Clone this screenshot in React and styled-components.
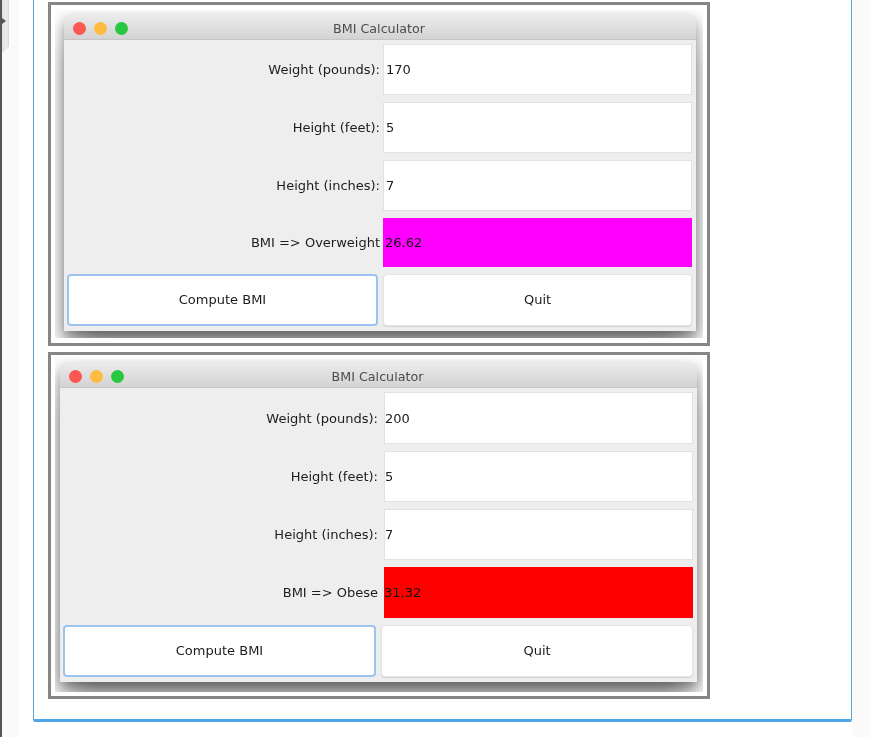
import React from 'react';
import styled, { createGlobalStyle } from 'styled-components';

const GlobalStyle = createGlobalStyle`
  html, body {
    margin: 0;
    padding: 0;
    height: 100%;
    overflow: hidden;
    background: #ffffff;
    font-family: "DejaVu Sans", "Liberation Sans", sans-serif;
  }
`;

const Page = styled.div`
  display: flex;
  align-items: flex-start;
  width: 870px;
  height: 737px;
  overflow: hidden;
`;

const Gutter = styled.div`
  width: 33px;
  height: 737px;
  flex: none;
  display: flex;
  background: linear-gradient(to right, #fafafa 0, #fafafa 19px, #ffffff 19px);
`;

const SideEdge = styled.div`
  width: 2px;
  height: 737px;
  background: #55555d;
`;

const SideTab = styled.div`
  position: relative;
  width: 7px;
  height: 52px;
  background: linear-gradient(to right, #e2e2e2, #ececec 70%, #d4d4d4);
  clip-path: polygon(0 0, 100% 0, 100% 90%, 15% 100%, 0 100%);

  &::after {
    content: '';
    position: absolute;
    left: 0;
    top: 18px;
    border-left: 4px solid #555555;
    border-top: 3px solid transparent;
    border-bottom: 3px solid transparent;
  }
`;

const Panel = styled.div`
  width: 819px;
  height: 722px;
  box-sizing: border-box;
  flex: none;
  padding: 2px 0 0 14px;
  background: #ffffff;
  border-left: 1px solid #5aa5dc;
  border-right: 1px solid #5aa5dc;
  border-bottom: 3px solid #4fa6e6;
  border-bottom-left-radius: 2px;
  border-bottom-right-radius: 2px;
  display: flex;
  flex-direction: column;
  gap: 6px;
`;

const RightGutter = styled.div`
  flex: 1;
  height: 737px;
  background: #fafafa;
`;

const Frame = styled.div`
  width: 662px;
  height: ${(p) => p.$height}px;
  box-sizing: border-box;
  border: 3px solid #868686;
  background: #ffffff;
  padding: ${(p) => p.$pad};
`;

const Shot = styled.div`
  height: 100%;
  box-sizing: border-box;
  overflow: hidden;
  padding: ${(p) => p.$pad};
  background: #fcfcfc;
  filter: blur(0.3px);
`;

const Window = styled.div`
  width: ${(p) => p.$width}px;
  background: #eeeeee;
  border-radius: 6px 6px 0 0;
  box-shadow: 0 6px 14px rgba(0, 0, 0, 0.42), 0 24px 30px -8px rgba(0, 0, 0, 0.42);
`;

const TitleBar = styled.div`
  position: relative;
  height: 25px;
  box-sizing: border-box;
  padding: 2px 2px 0 0;
  display: flex;
  align-items: center;
  justify-content: center;
  border-radius: 6px 6px 0 0;
  background: linear-gradient(to bottom, #ebebeb, #d3d3d3);
  border-bottom: 1px solid #c6c6c6;
`;

const Lights = styled.div`
  position: absolute;
  left: 9px;
  top: 7px;
  display: flex;
  gap: 8px;
`;

const Light = styled.span`
  width: 13px;
  height: 13px;
  border-radius: 50%;
  background: ${(p) => p.$color};
`;

const Title = styled.span`
  font-size: 12.7px;
  color: #4c4c4c;
`;

const Form = styled.div`
  display: grid;
  grid-template-columns: ${(p) => p.$columns};
  grid-template-rows: ${(p) => p.$rows};
  column-gap: 5px;
  row-gap: 7px;
  padding: 4px 0 5px 3px;
`;

const Label = styled.div`
  display: flex;
  align-items: center;
  justify-content: flex-end;
  margin-right: -2px;
  font-size: 13px;
  color: #1c1c1c;
  white-space: pre;
`;

const Field = styled.div`
  display: flex;
  align-items: center;
  box-sizing: border-box;
  margin-left: ${(p) => p.$inset}px;
  padding-left: ${(p) => (p.$inset ? 0 : 2)}px;
  font-size: 13px;
  color: #1c1c1c;
  background: #ffffff;
  border: 1px solid #e2e2e2;
`;

const Result = styled.div`
  display: flex;
  align-items: center;
  margin-left: ${(p) => p.$inset}px;
  padding-left: ${(p) => (p.$inset ? 0 : 2)}px;
  font-size: 13px;
  color: #111111;
  background: ${(p) => p.$color};
`;

const Button = styled.button`
  font: inherit;
  font-size: 13px;
  color: #1c1c1c;
  margin: 0;
  padding: 0 0 2px;
  background: #ffffff;
  border-radius: 4px;
  border: ${(p) => (p.$focused ? '2px solid #9cc4ee' : '1px solid #e4e4e4')};
  box-shadow: ${(p) => (p.$focused ? 'none' : '0 1px 1px #d4d4d4')};
`;

const rows = (weight, label, bmi, color) => [
  ['Weight (pounds):', weight],
  ['Height (feet):', '5'],
  ['Height (inches):', '7'],
  [label, bmi, color],
];

const shots = [
  {
    height: 344,
    framePad: '5px 4px',
    pad: '5px 0 0 9px',
    width: 632,
    columns: '311px 309px',
    gridRows: '51px 51px 51px 49px 52px',
    inset: 0,
    rows: rows('170', 'BMI => Overweight', '26.62', '#ff00ff'),
  },
  {
    height: 347,
    framePad: '3px 4px 4px',
    pad: '5px 0 0 5px',
    width: 637,
    columns: '313px 312px',
    gridRows: '52px 51px 51px 51px 52px',
    inset: 3,
    rows: rows('200', 'BMI => Obese', '31.32', '#ff0000'),
  },
];

export default function App() {
  return (
    <Page>
      <GlobalStyle />
      <Gutter>
        <SideEdge />
        <SideTab />
      </Gutter>
      <Panel>
        {shots.map((shot) => (
          <Frame key={shot.rows[0][1]} $height={shot.height} $pad={shot.framePad}>
            <Shot $pad={shot.pad}>
              <Window $width={shot.width}>
                <TitleBar>
                  <Lights>
                    <Light $color="#fc5753" />
                    <Light $color="#fdbc40" />
                    <Light $color="#27c83f" />
                  </Lights>
                  <Title>BMI Calculator</Title>
                </TitleBar>
                <Form $columns={shot.columns} $rows={shot.gridRows}>
                  {shot.rows.map(([label, value, color]) => (
                    <React.Fragment key={label}>
                      <Label>{label}</Label>
                      {color ? (
                        <Result $color={color} $inset={shot.inset}>{value}</Result>
                      ) : (
                        <Field $inset={shot.inset}>{value}</Field>
                      )}
                    </React.Fragment>
                  ))}
                  <Button $focused>Compute BMI</Button>
                  <Button>Quit</Button>
                </Form>
              </Window>
            </Shot>
          </Frame>
        ))}
      </Panel>
      <RightGutter />
    </Page>
  );
}
